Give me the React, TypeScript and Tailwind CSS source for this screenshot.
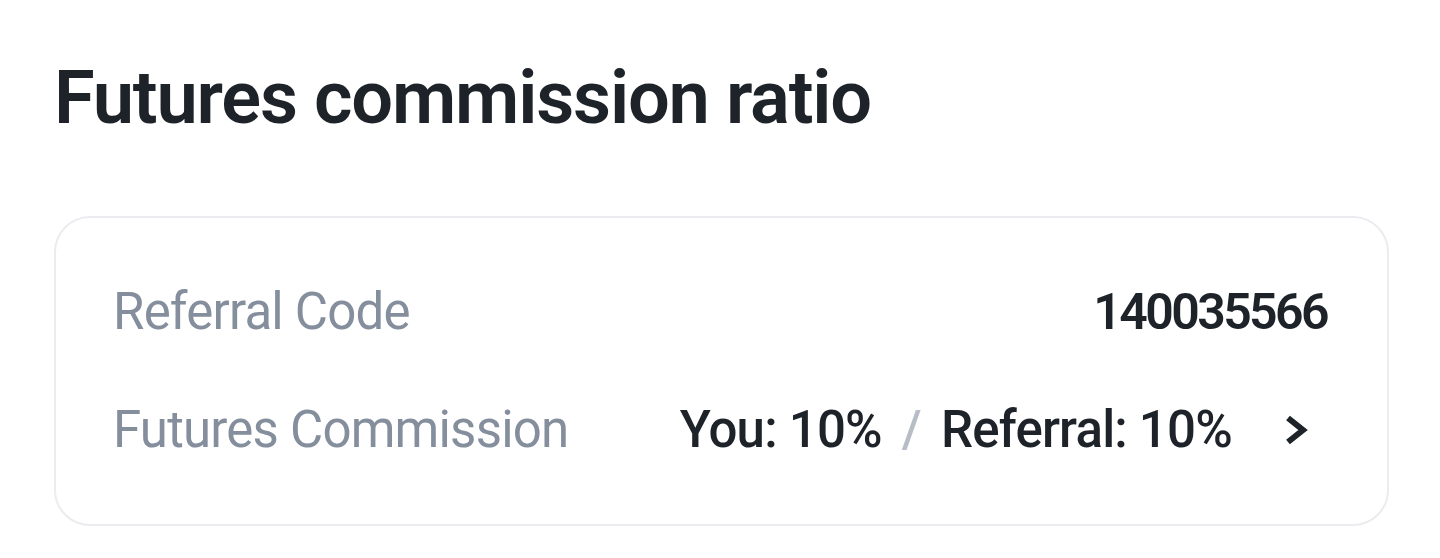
import React from 'react';

const font = { fontFamily: 'Roboto, "Noto Sans", sans-serif' };

export default function App() {
  return (
    <div className="min-h-screen bg-white px-[54px] pt-[61px]" style={font}>
      <h1 className="text-[74px] leading-none font-semibold text-[#1e2329] tracking-[-1.2px]">
        Futures commission ratio
      </h1>

      <div className="mt-[81px] w-[1335px] rounded-[36px] border-2 border-[#eaecef] px-[57px] py-[35px]">
        {/* Referral code */}
        <div className="flex h-[118px] items-center justify-between">
          <span className="text-[51px] tracking-[-0.8px] text-[#848e9c]">Referral Code</span>
          <span className="pr-[3px] text-[50px] font-semibold tracking-[-2.6px] text-[#1e2329]">140035566</span>
        </div>

        {/* Commission split */}
        <div className="flex h-[118px] items-center justify-between">
          <span className="text-[51px] tracking-[-0.8px] text-[#848e9c]">Futures Commission</span>
          <div className="flex items-center text-[51px] font-medium tracking-[-0.8px] text-[#1e2329]">
            <span>You: 10%</span>
            <span className="mx-[20px] text-[#b7bdc6]">/</span>
            <span>Referral: 10%</span>
            <svg width="26" height="30" viewBox="0 0 26 30" className="ml-[52px] mr-[20px]">
              <path d="M4 3 L19 15 L4 27" fill="none" stroke="#1e2329" strokeWidth="6" strokeLinejoin="miter" />
            </svg>
          </div>
        </div>
      </div>
    </div>
  );
}
